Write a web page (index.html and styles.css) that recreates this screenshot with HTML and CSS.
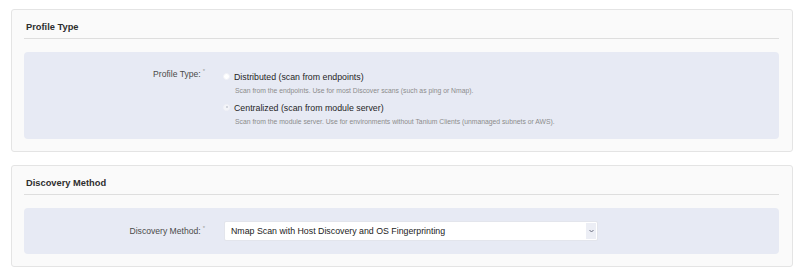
FILE: index.html
```html
<!DOCTYPE html>
<html lang="en">
<head>
    <meta charset="UTF-8">
    <meta name="viewport" content="width=device-width, initial-scale=1.0">
    <title>Discover Profile</title>
    <link rel="stylesheet" href="styles.css">
</head>
<body>
    <div class="page">
        <!-- Profile type -->
        <section class="card">
            <h2 class="card-title">Profile Type</h2>
            <div class="panel panel-radios">
                <div class="field">
                    <label class="field-label">Profile Type:<span class="req">*</span></label>
                    <div class="field-body">
                        <div class="option">
                            <label class="radio-row">
                                <span class="radio"></span>
                                <span class="radio-text">Distributed (scan from endpoints)</span>
                            </label>
                            <div class="help">Scan from the endpoints. Use for most Discover scans (such as ping or Nmap).</div>
                        </div>
                        <div class="option">
                            <label class="radio-row">
                                <span class="radio checked"></span>
                                <span class="radio-text">Centralized (scan from module server)</span>
                            </label>
                            <div class="help">Scan from the module server. Use for environments without Tanium Clients (unmanaged subnets or AWS).</div>
                        </div>
                    </div>
                </div>
            </div>
        </section>

        <!-- Discovery method -->
        <section class="card">
            <h2 class="card-title">Discovery Method</h2>
            <div class="panel panel-select">
                <div class="field field-center">
                    <label class="field-label" for="method">Discovery Method:<span class="req">*</span></label>
                    <div class="field-body">
                        <div class="select-wrap">
                            <select id="method">
                                <option>Nmap Scan with Host Discovery and OS Fingerprinting</option>
                            </select>
                            <span class="select-caret">
                                <svg width="5" height="4" viewBox="0 0 5 4"><path d="M0.5 1 L2.5 3 L4.5 1" fill="none" stroke="#6b6f80" stroke-width="1"/></svg>
                            </span>
                        </div>
                    </div>
                </div>
            </div>
        </section>
    </div>
</body>
</html>
```

FILE: styles.css
```css
body {
    margin: 0;
    padding: 0;
    background-color: #ffffff;
    font-family: 'Liberation Sans', Arial, sans-serif;
    color: #333;
}
.page {
    padding: 9px 7px 0 11px;
}
.card {
    background-color: #fafafa;
    border: 1px solid #e4e4e4;
    border-radius: 3px;
    padding: 0 13px 12px 12px;
    margin-bottom: 13px;
}
.card-title {
    margin: 0;
    padding: 12px 0 5px 2px;
    font-size: 9.3px;
    line-height: 11px;
    font-weight: bold;
    color: #2e2e2e;
    border-bottom: 1px solid #dedede;
}
.panel {
    margin-top: 13px;
    background-color: #e7eaf4;
    border-radius: 4px;
}
.panel-radios {
    padding: 18px 0 12px;
}
.panel-select {
    padding: 13px 0;
}
.field {
    display: flex;
    align-items: flex-start;
}
.field-center {
    align-items: center;
}
.field-label {
    width: 181px;
    flex-shrink: 0;
    margin-right: 17px;
    text-align: right;
    font-size: 8.6px;
    line-height: 13px;
    color: #4a4a4a;
}
.panel-radios .field-label {
    margin-top: -2px;
}
.req {
    font-size: 6px;
    line-height: 6px;
    vertical-align: top;
    color: #9a9a9a;
    margin-left: 2px;
}
.field-body {
    flex: 1;
}
.option {
    margin-bottom: 5px;
}
.option:last-child {
    margin-bottom: 0;
}
.radio-row {
    display: flex;
    align-items: center;
    height: 13px;
}
.radio {
    width: 7px;
    height: 7px;
    border-radius: 50%;
    background-color: #ffffff;
    border: 1px solid #f1f2f7;
    margin: -1px 4px 0 1px;
    box-sizing: border-box;
    display: flex;
    align-items: center;
    justify-content: center;
}
.radio.checked {
    background-color: #f4f5f9;
}
.radio.checked::after {
    content: "";
    width: 2px;
    height: 2px;
    border-radius: 50%;
    background-color: #c6c8d2;
}
.radio-text {
    font-size: 8.8px;
    color: #1f1f1f;
}
.help {
    margin-top: 3px;
    padding-left: 13px;
    font-size: 6.8px;
    line-height: 10px;
    color: #8c8c8c;
}
.select-wrap {
    display: flex;
    width: 374px;
    height: 20px;
    margin-left: 2px;
    background-color: #ffffff;
    border: 1px solid #e3e5ec;
    border-radius: 2px;
    box-sizing: border-box;
}
.select-wrap select {
    flex: 1;
    -webkit-appearance: none;
    appearance: none;
    border: none;
    background: transparent;
    padding: 0 0 0 6px;
    margin: 0;
    font-family: 'Liberation Sans', Arial, sans-serif;
    font-size: 8.8px;
    color: #222;
    outline: none;
}
.select-caret {
    width: 10px;
    margin: 1px 1px 1px 0;
    background-color: #eceef5;
    display: flex;
    align-items: center;
    justify-content: center;
}
```
